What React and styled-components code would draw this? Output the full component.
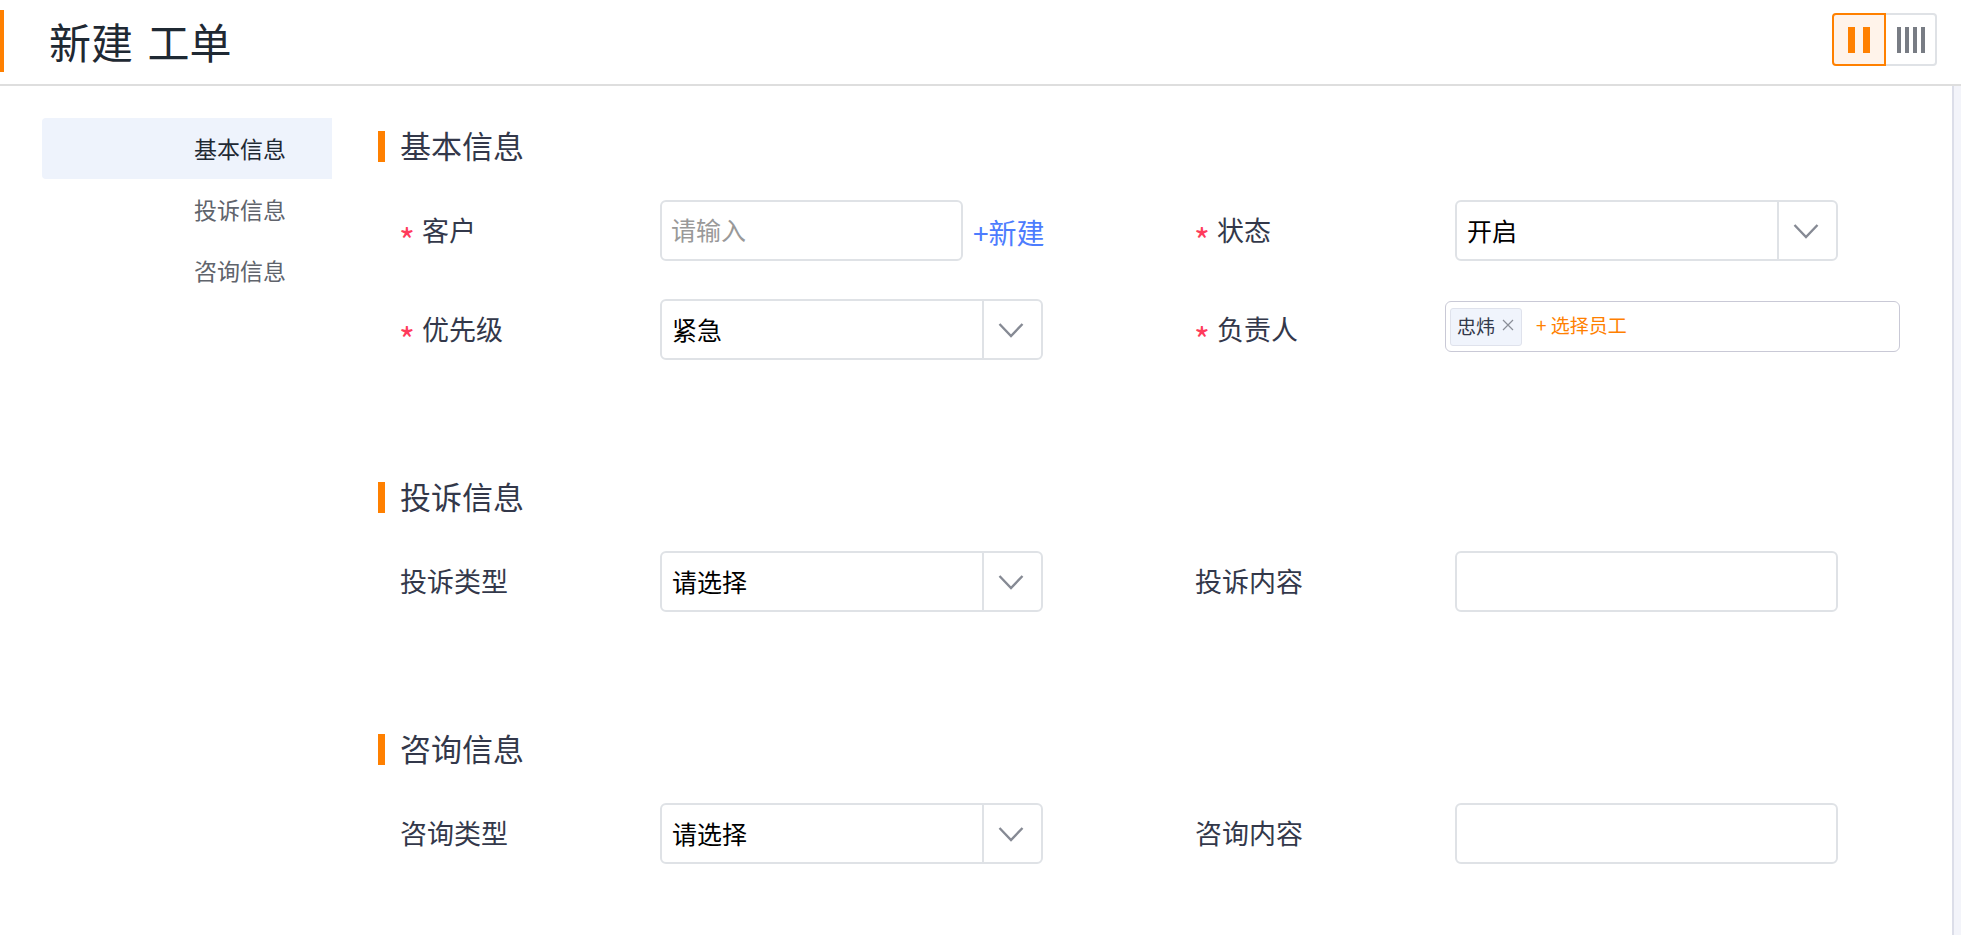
import styled, { createGlobalStyle } from 'styled-components';

const GlobalStyle = createGlobalStyle`
html, body {
    margin: 0;
    padding: 0;
    background: #fff;
    font-family: "Noto Sans CJK SC", "Liberation Sans", sans-serif;
}
* {
    box-sizing: border-box;
}
`;

const Page = styled.div`
width: 1961px;
height: 935px;
overflow: hidden;
background: #fff;
`;

const Header = styled.header`
display: flex;
align-items: center;
justify-content: space-between;
height: 86px;
padding-right: 24px;
border-bottom: 2px solid #dedede;
`;

const TitleBar = styled.div`
display: flex;
align-items: center;
height: 62px;
margin-top: -2px;
padding-left: 45px;
border-left: 4px solid #ff8000;
`;

const Title = styled.h1`
margin: 0;
font-size: 42px;
font-weight: 400;
line-height: 62px;
word-spacing: 5px;
color: #1f2933;
`;

const Toggle = styled.div`
display: flex;
margin-top: -5px;
`;

const ToggleButton = styled.div`
display: flex;
align-items: center;
justify-content: center;
gap: ${p => (p.$active ? '8px' : '4px')};
width: ${p => (p.$active ? '54px' : '51px')};
height: 53px;
border: 2px solid ${p => (p.$active ? '#ff8000' : '#dfe2e6')};
border-left-width: ${p => (p.$active ? '2px' : '0')};
border-radius: ${p => (p.$active ? '4px 0 0 4px' : '0 4px 4px 0')};
background: ${p => (p.$active ? '#fff3ea' : '#fff')};
`;

const ToggleBar = styled.span`
width: ${p => (p.$active ? '7px' : '4px')};
height: 26px;
background: ${p => (p.$active ? '#ff8000' : '#787c84')};
`;

const Body = styled.div`
display: flex;
height: 849px;
`;

const SideNav = styled.nav`
flex-shrink: 0;
width: 290px;
margin: 32px 0 0 42px;
`;

const NavItem = styled.div`
height: 61px;
padding-left: 152px;
border-radius: 4px 0 0 4px;
font-size: 23px;
line-height: 60px;
color: ${p => (p.$active ? '#1f2933' : '#60646c')};
background: ${p => (p.$active ? '#eef3fc' : 'transparent')};
`;

const Main = styled.main`
display: flex;
flex: 1;
flex-direction: column;
gap: 122px;
padding: 45px 0 0 46px;
`;

const ScrollTrack = styled.div`
flex-shrink: 0;
width: 9px;
border-left: 2px solid #dcdee9;
background: #f3f4fa;
`;

const Section = styled.section`
display: flex;
flex-direction: column;
gap: 38px;
`;

const SectionTitle = styled.h2`
margin: 0;
height: 31px;
padding-left: 15px;
border-left: 7px solid #ff8000;
font-size: 31px;
font-weight: 400;
line-height: 28px;
color: #33384a;
`;

const FormGrid = styled.div`
display: grid;
grid-template-columns: 643px 641px;
column-gap: 152px;
row-gap: 38px;
padding-left: 22px;
`;

const Field = styled.div`
display: flex;
align-items: flex-start;
height: 61px;
`;

const Label = styled.label`
position: relative;
display: block;
flex-shrink: 0;
width: 260px;
padding-left: ${p => (p.$required ? '22px' : '0')};
font-size: 27px;
line-height: 60px;
color: #33384a;
`;

const Star = styled.span`
position: absolute;
left: -1px;
top: 10px;
font-size: 34px;
color: #ff3b5c;
`;

const TextInput = styled.input`
flex-shrink: 0;
width: ${p => p.$width};
height: 61px;
padding: 0 9px 4px;
border: 2px solid #dfe2e6;
border-radius: 6px;
outline: none;
font: inherit;
font-size: 25px;
color: #000;
&::placeholder {
    color: #999;
}
`;

const NewLink = styled.a`
margin-left: 10px;
font-size: 28px;
line-height: 64px;
white-space: nowrap;
color: #4d7cfe;
`;

const Select = styled.div`
display: flex;
flex-shrink: 0;
width: 383px;
height: 61px;
border: 2px solid #dfe2e6;
border-radius: 6px;
`;

const SelectValue = styled.div`
flex: 1;
padding-left: 10px;
font-size: 25px;
line-height: 56px;
color: #000;
`;

const SelectArrow = styled.div`
display: flex;
align-items: center;
justify-content: center;
width: 59px;
padding-right: 3px;
border-left: 2px solid #dfe2e6;
`;

const TagBox = styled.div`
display: flex;
flex-shrink: 0;
align-items: center;
width: 455px;
height: 51px;
margin: 2px 0 0 -10px;
padding-left: 4px;
border: 1px solid #c9c9d6;
border-radius: 6px;
`;

const Tag = styled.span`
display: flex;
align-items: center;
gap: 7px;
height: 38px;
padding: 0 7px 3px 6px;
border: 1px solid #dfe2ec;
border-radius: 3px;
background: #f0f4fc;
font-size: 19px;
color: #33384a;
`;

const AddStaff = styled.span`
margin: 0 0 4px 14px;
font-size: 19px;
color: #ff8000;
`;

const Chevron = () => (
    <svg width="26" height="16" viewBox="0 0 26 16" fill="none">
        <path d="M1.5 2 L13 14 L24.5 2" stroke="#868a94" strokeWidth="2.4" />
    </svg>
);

const CloseIcon = () => (
    <svg width="12" height="12" viewBox="0 0 12 12" fill="none">
        <path d="M1 1 L11 11 M11 1 L1 11" stroke="#8a8e98" strokeWidth="1.2" />
    </svg>
);

const sections = ['基本信息', '投诉信息', '咨询信息'];

export default function App() {
    return (
        <Page>
            <GlobalStyle />
            <Header>
                <TitleBar>
                    <Title>新建 工单</Title>
                </TitleBar>
                <Toggle>
                    <ToggleButton $active>
                        <ToggleBar $active />
                        <ToggleBar $active />
                    </ToggleButton>
                    <ToggleButton>
                        <ToggleBar />
                        <ToggleBar />
                        <ToggleBar />
                        <ToggleBar />
                    </ToggleButton>
                </Toggle>
            </Header>
            <Body>
                <SideNav>
                    {sections.map((name, i) => (
                        <NavItem key={name} $active={i === 0}>{name}</NavItem>
                    ))}
                </SideNav>
                <Main>
                    <Section>
                        <SectionTitle>基本信息</SectionTitle>
                        <FormGrid>
                            <Field>
                                <Label $required><Star>*</Star>客户</Label>
                                <TextInput $width="303px" placeholder="请输入" />
                                <NewLink>+新建</NewLink>
                            </Field>
                            <Field>
                                <Label $required><Star>*</Star>状态</Label>
                                <Select>
                                    <SelectValue>开启</SelectValue>
                                    <SelectArrow><Chevron /></SelectArrow>
                                </Select>
                            </Field>
                            <Field>
                                <Label $required><Star>*</Star>优先级</Label>
                                <Select>
                                    <SelectValue>紧急</SelectValue>
                                    <SelectArrow><Chevron /></SelectArrow>
                                </Select>
                            </Field>
                            <Field>
                                <Label $required><Star>*</Star>负责人</Label>
                                <TagBox>
                                    <Tag>忠炜 <CloseIcon /></Tag>
                                    <AddStaff>+ 选择员工</AddStaff>
                                </TagBox>
                            </Field>
                        </FormGrid>
                    </Section>
                    <Section>
                        <SectionTitle>投诉信息</SectionTitle>
                        <FormGrid>
                            <Field>
                                <Label>投诉类型</Label>
                                <Select>
                                    <SelectValue>请选择</SelectValue>
                                    <SelectArrow><Chevron /></SelectArrow>
                                </Select>
                            </Field>
                            <Field>
                                <Label>投诉内容</Label>
                                <TextInput $width="383px" />
                            </Field>
                        </FormGrid>
                    </Section>
                    <Section>
                        <SectionTitle>咨询信息</SectionTitle>
                        <FormGrid>
                            <Field>
                                <Label>咨询类型</Label>
                                <Select>
                                    <SelectValue>请选择</SelectValue>
                                    <SelectArrow><Chevron /></SelectArrow>
                                </Select>
                            </Field>
                            <Field>
                                <Label>咨询内容</Label>
                                <TextInput $width="383px" />
                            </Field>
                        </FormGrid>
                    </Section>
                </Main>
                <ScrollTrack />
            </Body>
        </Page>
    );
}
